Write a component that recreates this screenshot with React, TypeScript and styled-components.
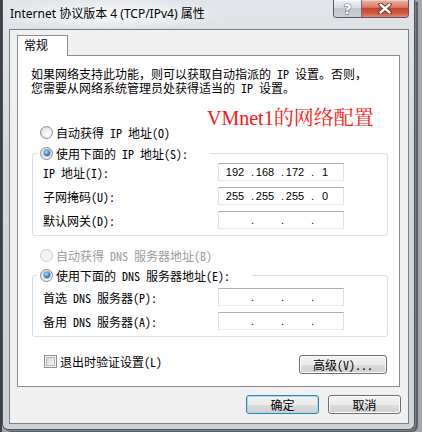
import React from 'react';
import styled, { createGlobalStyle, css } from 'styled-components';

const UI = `"Noto Sans Mono CJK SC", "Noto Sans CJK SC", sans-serif`;

const Global = createGlobalStyle`
  html, body { margin: 0; padding: 0; }
  body { width: 422px; height: 432px; overflow: hidden; background: #9ea2a7; }
  * { box-sizing: border-box; }
`;

const Stage = styled.div`
  width: 422px;
  height: 432px;
  padding-left: 2px;
  background: linear-gradient(90deg, #3e4248 0 2px, #a4a8ad 2px);
`;

const Window = styled.div`
  width: 413px;
  height: 430px;
  border: 1px solid #4e535a;
  border-top: none;
  border-radius: 0 0 6px 6px;
  background: linear-gradient(180deg, #e1e5e9 0%, #d4d9de 35%, #cdd2d7 100%);
  box-shadow: 1px 1px 0 #7c8086, 3px 2px 0 #5c6066;
  display: flex;
  flex-direction: column;
  padding: 0 5px 5px 6px;
`;

const TitleBar = styled.div`
  height: 29px;
  flex: none;
  display: flex;
  align-items: flex-start;
  padding-left: 1px;
  background: radial-gradient(ellipse 120px 16px at 100px 14px, rgba(255,255,255,0.85), rgba(255,255,255,0) 100%);
`;

const Title = styled.div`
  font: 12px "Noto Sans", "Noto Sans CJK SC", sans-serif;
  line-height: 28px;
  color: #000;
  white-space: nowrap;
`;

const Caption = styled.div`
  margin-left: auto;
  display: flex;
  height: 18px;
  border: 1px solid #565b62;
  border-top: none;
  border-radius: 0 0 4px 4px;
  overflow: hidden;
`;

const CapButton = styled.div<{ $close?: boolean }>`
  height: 17px;
  width: ${p => (p.$close ? 46 : 28)}px;
  display: flex;
  align-items: center;
  justify-content: center;
  ${p =>
    p.$close
      ? css`
          background: linear-gradient(180deg, #eab2a4 0%, #db7d66 42%, #c6452d 50%, #cf5d44 80%, #e08a70 100%);
          box-shadow: inset 0 1px 0 #f4cfc4;
        `
      : css`
          border-right: 1px solid #6a7077;
          background: linear-gradient(180deg, #eef1f4 0%, #d8dde3 45%, #bfc6ce 50%, #cbd2d9 100%);
          box-shadow: inset 0 1px 0 #f8f9fa;
        `}
`;

const HelpGlyph = styled.span`
  font: bold 14px "DejaVu Sans", sans-serif;
  line-height: 14px;
  color: #fff;
  -webkit-text-stroke: 1px #58606a;
  paint-order: stroke fill;
`;

const Client = styled.div`
  flex: 1;
  border: 1px solid #7a7f86;
  background: #f0f0f0;
  padding: 5px 8px 0 7px;
  display: flex;
  flex-direction: column;
  font-family: ${UI};
  font-size: 12px;
  color: #000;
`;

const Tab = styled.div`
  position: relative;
  z-index: 1;
  width: 51px;
  height: 21px;
  margin-bottom: -1px;
  border: 1px solid #898c95;
  border-bottom: none;
  background: #fff;
  padding-left: 6px;
  line-height: 18px;
  font-family: "Noto Sans CJK SC", sans-serif;
  font-size: 12px;
`;

const Panel = styled.div`
  position: relative;
  width: 383px;
  height: 332px;
  border: 1px solid #898c95;
  background: #fff;
  padding: 11px 12px 0 13px;
  display: flex;
  flex-direction: column;
`;

const Desc = styled.div`
  line-height: 14px;
  white-space: nowrap;
`;

const Annotation = styled.div`
  position: absolute;
  left: 189px;
  top: 52px;
  font: 20px "Liberation Serif", "Noto Serif CJK SC", "Noto Sans CJK SC", serif;
  line-height: 20px;
  color: #ff1414;
  white-space: nowrap;
`;

const RadioRow = styled.div<{ $mt: number; $disabled?: boolean }>`
  display: flex;
  align-items: center;
  gap: 3px;
  height: 18px;
  margin-top: ${p => p.$mt}px;
  margin-left: 9px;
  color: ${p => (p.$disabled ? '#9b9b9b' : '#000')};
  white-space: nowrap;
`;

const RadioCircle = styled.span<{ $checked?: boolean; $disabled?: boolean }>`
  width: 13px;
  height: 13px;
  flex: none;
  border-radius: 50%;
  border: 1px solid ${p => (p.$disabled ? '#c8c9ca' : '#8a8c8e')};
  background: ${p =>
    p.$disabled
      ? '#f4f4f4'
      : 'radial-gradient(circle at 60% 65%, #ffffff 0%, #f1f1f1 40%, #d4d4d4 100%)'};
  display: flex;
  align-items: center;
  justify-content: center;
  ${p =>
    p.$checked &&
    css`
      &::after {
        content: '';
        width: 6px;
        height: 6px;
        border-radius: 50%;
        background: radial-gradient(circle at 40% 35%, #b8e6ff 0%, #3b8fe0 45%, #0f3f86 100%);
        box-shadow: 0 0 0 1px rgba(30, 70, 130, 0.35);
      }
    `}
`;

const Group = styled.div<{ $mt: number }>`
  margin-top: ${p => p.$mt}px;
  margin-left: 1px;
  width: 356px;
  border: 1px solid #d5dfe5;
  border-radius: 3px;
  padding-bottom: 3px;
  display: flex;
  flex-direction: column;
`;

const Legend = styled.div`
  align-self: flex-start;
  display: flex;
  align-items: center;
  gap: 3px;
  height: 20px;
  margin-top: -11px;
  margin-left: 4px;
  padding: 0 22px 0 3px;
  background: #fff;
  white-space: nowrap;
`;

const Rows = styled.div<{ $mt: number }>`
  margin-top: ${p => p.$mt}px;
  padding-left: 10px;
  display: flex;
  flex-direction: column;
`;

const Row = styled.div`
  height: 24px;
  display: flex;
  align-items: center;
`;

const RowLabel = styled.span`
  width: 175px;
  flex: none;
  white-space: nowrap;
`;

const IpBox = styled.div`
  width: 126px;
  height: 18px;
  border: 1px solid;
  border-color: #abadb3 #dbdfe6 #e3e9ef #e2e3ea;
  background: #fff;
  display: flex;
  align-items: center;
  padding-left: 4px;
  font: 11px "Liberation Sans", Arial, sans-serif;
  color: #000;
`;

const Seg = styled.span`
  width: 24px;
  flex: none;
  text-align: center;
`;

const Dot = styled.span`
  width: 6px;
  flex: none;
  padding-left: 4px;
`;

const BottomRow = styled.div`
  margin-top: 18px;
  display: flex;
  align-items: flex-start;
  justify-content: space-between;
`;

const CheckLabel = styled.div`
  display: flex;
  align-items: center;
  gap: 3px;
  margin-left: 13px;
  height: 13px;
  white-space: nowrap;
`;

const CheckBox = styled.span`
  width: 13px;
  height: 13px;
  flex: none;
  border: 1px solid #8e8f8f;
  background: linear-gradient(135deg, #cdd0d4 0%, #e9eaec 60%, #f8f8f8 100%);
  box-shadow: inset 0 0 0 1px #f5f5f5, inset 0 0 0 2px #b4b8bd;
`;

const Button = styled.button<{ $w: number; $default?: boolean }>`
  width: ${p => p.$w}px;
  height: 19px;
  padding: 0;
  border-radius: 3px;
  border: 1px solid ${p => (p.$default ? '#3c7fb1' : '#707070')};
  background: linear-gradient(180deg, #f2f2f2 0%, #ebebeb 50%, #dddddd 51%, #cfcfcf 100%);
  box-shadow: inset 0 0 0 1px ${p => (p.$default ? '#9fdcf7' : '#fbfbfb')};
  font-family: ${UI};
  font-size: 12px;
  line-height: 16px;
  color: #000;
  white-space: nowrap;
`;

const DialogButtons = styled.div`
  margin-top: 8px;
  margin-right: -1px;
  display: flex;
  justify-content: flex-end;
  gap: 9px;
`;

const DlgButtonText = styled.span`
  font-family: "Noto Sans CJK SC", sans-serif;
`;

function Ip({ v }: { v?: string[] }) {
  const parts = v ?? ['', '', '', ''];
  return (
    <IpBox>
      <Seg>{parts[0]}</Seg>
      <Dot>.</Dot>
      <Seg>{parts[1]}</Seg>
      <Dot>.</Dot>
      <Seg>{parts[2]}</Seg>
      <Dot>.</Dot>
      <Seg>{parts[3]}</Seg>
    </IpBox>
  );
}

function CloseIcon() {
  return (
    <svg width="14" height="11" viewBox="0 0 14 11">
      <path d="M2.5 1.5 L11.5 9.5 M11.5 1.5 L2.5 9.5" stroke="#5a2418" strokeWidth="4.2" strokeLinecap="round" />
      <path d="M2.5 1.5 L11.5 9.5 M11.5 1.5 L2.5 9.5" stroke="#ffffff" strokeWidth="2.4" strokeLinecap="round" />
    </svg>
  );
}

export default function App() {
  return (
    <>
      <Global />
      <Stage>
        <Window>
          <TitleBar>
            <Title>Internet 协议版本 4 (TCP/IPv4) 属性</Title>
            <Caption>
              <CapButton>
                <HelpGlyph>?</HelpGlyph>
              </CapButton>
              <CapButton $close>
                <CloseIcon />
              </CapButton>
            </Caption>
          </TitleBar>
          <Client>
            <Tab>常规</Tab>
            <Panel>
              <Desc>
                如果网络支持此功能，则可以获取自动指派的 IP 设置。否则，
                <br />
                您需要从网络系统管理员处获得适当的 IP 设置。
              </Desc>
              <Annotation>VMnet1的网络配置</Annotation>

              <RadioRow $mt={28}>
                <RadioCircle />
                自动获得 IP 地址(O)
              </RadioRow>

              <Group $mt={12}>
                <Legend>
                  <RadioCircle $checked />
                  使用下面的 IP 地址(S):
                </Legend>
                <Rows $mt={-3}>
                  <Row>
                    <RowLabel>IP 地址(I):</RowLabel>
                    <Ip v={['192', '168', '172', '1']} />
                  </Row>
                  <Row>
                    <RowLabel>子网掩码(U):</RowLabel>
                    <Ip v={['255', '255', '255', '0']} />
                  </Row>
                  <Row>
                    <RowLabel>默认网关(D):</RowLabel>
                    <Ip />
                  </Row>
                </Rows>
              </Group>

              <RadioRow $mt={10} $disabled>
                <RadioCircle $disabled />
                自动获得 DNS 服务器地址(B)
              </RadioRow>

              <Group $mt={11}>
                <Legend>
                  <RadioCircle $checked />
                  使用下面的 DNS 服务器地址(E):
                </Legend>
                <Rows $mt={0}>
                  <Row>
                    <RowLabel>首选 DNS 服务器(P):</RowLabel>
                    <Ip />
                  </Row>
                  <Row>
                    <RowLabel>备用 DNS 服务器(A):</RowLabel>
                    <Ip />
                  </Row>
                </Rows>
              </Group>

              <BottomRow>
                <CheckLabel>
                  <CheckBox />
                  退出时验证设置(L)
                </CheckLabel>
                <Button $w={88}>高级(V)...</Button>
              </BottomRow>
            </Panel>
            <DialogButtons>
              <Button $w={73} $default>
                <DlgButtonText>确定</DlgButtonText>
              </Button>
              <Button $w={73}>
                <DlgButtonText>取消</DlgButtonText>
              </Button>
            </DialogButtons>
          </Client>
        </Window>
      </Stage>
    </>
  );
}
